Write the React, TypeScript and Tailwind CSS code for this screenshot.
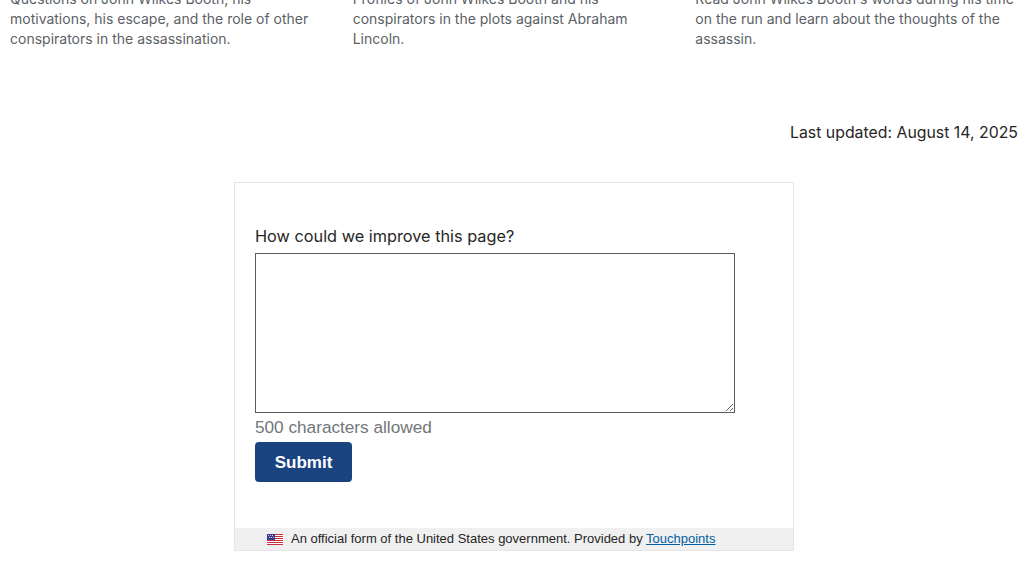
const cards = [
  "Questions on John Wilkes Booth, his motivations, his escape, and the role of other conspirators in the assassination.",
  "Profiles of John Wilkes Booth and his conspirators in the plots against Abraham Lincoln.",
  "Read John Wilkes Booth's words during his time on the run and learn about the thoughts of the assassin.",
];

function UsFlag() {
  return (
    <svg width="16" height="11" viewBox="0 0 16 11" className="shrink-0">
      <rect width="16" height="11" fill="#fff" />
      <rect y="0" width="16" height="1" fill="#c8313e" />
      <rect y="2" width="16" height="1" fill="#c8313e" />
      <rect y="4" width="16" height="1" fill="#c8313e" />
      <rect y="6" width="16" height="1" fill="#c8313e" />
      <rect y="8" width="16" height="1" fill="#c8313e" />
      <rect y="10" width="16" height="1" fill="#c8313e" />
      <rect width="8" height="6" fill="#3c3b8e" />
      <rect x="1" y="1" width="1" height="1" fill="#cfd0e8" />
      <rect x="3" y="1" width="1" height="1" fill="#cfd0e8" />
      <rect x="5" y="1" width="1" height="1" fill="#cfd0e8" />
      <rect x="2" y="3" width="1" height="1" fill="#cfd0e8" />
      <rect x="4" y="3" width="1" height="1" fill="#cfd0e8" />
      <rect x="6" y="3" width="1" height="1" fill="#cfd0e8" />
    </svg>
  );
}

export default function App() {
  return (
    <div className="h-[578px] overflow-hidden bg-white font-['Inter',sans-serif]">
      {/* Kartu terpotong di bagian atas */}
      <div className="-mt-[11px] grid grid-cols-3">
        {cards.map((text) => (
          <p key={text} className="px-2.5 text-sm leading-5 text-[#5c5f66]">
            {text}
          </p>
        ))}
      </div>

      <p className="mt-[72px] pr-2.5 text-right text-[15.85px] leading-6 text-[#262626]">
        Last updated: August 14, 2025
      </p>

      {/* Form Touchpoints */}
      <div className="mx-auto mt-[37px] w-[560px] border border-[#e6e6e6]">
        <div className="px-5 pt-[43px] pb-[46px]">
          <label className="block text-[16.3px] leading-5 text-[#262626]">
            How could we improve this page?
          </label>
          <textarea className="mt-[7px] block h-40 w-[480px] border border-[#5c5c5c] bg-white" />
          <p className="mt-1 font-['Liberation_Sans',sans-serif] text-[17.2px] leading-5 text-[#71767a]">
            500 characters allowed
          </p>
          <button
            type="button"
            className="mt-[5px] block h-10 w-[97px] rounded bg-[#1a4480] pt-0.5 font-['Liberation_Sans',sans-serif] text-[17px] font-bold text-white"
          >
            Submit
          </button>
        </div>
        <div className="flex h-[22px] items-center gap-2 bg-[#f0f0f0] pl-8 font-['Liberation_Sans',sans-serif] text-[13px] text-[#262626]">
          <UsFlag />
          <span>
            An official form of the United States government. Provided by{" "}
            <a href="#" className="text-[#005ea2] underline">
              Touchpoints
            </a>
          </span>
        </div>
      </div>
    </div>
  );
}
